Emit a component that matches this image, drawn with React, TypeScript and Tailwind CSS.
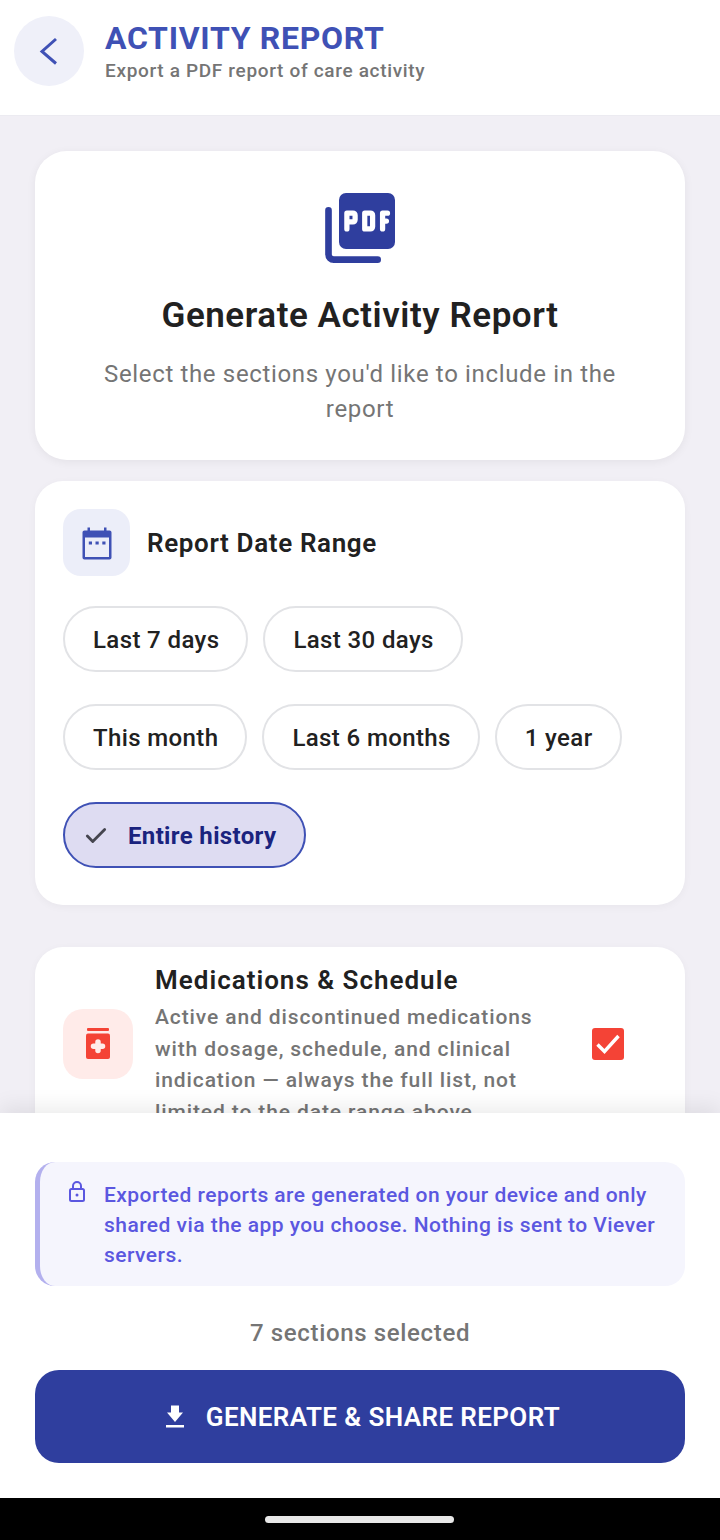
import { Check } from "lucide-react";

const row1 = ["Last 7 days", "Last 30 days"];
const row2 = ["This month", "Last 6 months", "1 year"];

function Chip({ label }: { label: string }) {
  return (
    <div className="h-[66px] pl-[28px] pr-[27px] pt-[2px] flex items-center rounded-full border-2 border-[#e2e3e6] bg-white text-[24px] font-[460] tracking-[0.38px] text-[#212121]">
      {label}
    </div>
  );
}

function BackIcon() {
  return (
    <svg width="42" height="42" viewBox="0 0 42 42" fill="none" stroke="#3f51b5" strokeWidth="3">
      <path d="M28 9L14 21.500L28 33.500" />
    </svg>
  );
}

function PdfIcon() {
  return (
    <svg width="84" height="84" viewBox="0 0 24 24" fill="none">
      <rect x="6" y="2" width="16" height="16" rx="2" fill="#2f3e9e" />
      <path d="M3 6.950V19.500c0 .85.650 1.550 1.500 1.550H17.050" stroke="#2f3e9e" strokeWidth="1.900" strokeLinecap="round" />
      <g stroke="#fff" strokeWidth="1.500" strokeLinecap="round" strokeLinejoin="round">
        <path d="M8.250 12.250V7.750H10c.35 0 .6.25.6.6v1.300c0 .35-.25.6-.6.6H8.250" />
        <path d="M13.350 7.750v4.500H15c.35 0 .6-.25.6-.6v-3.300c0-.35-.25-.6-.6-.6z" />
        <path d="M18.450 12.250v-4.500h1.400M18.450 10h1.100" />
      </g>
    </svg>
  );
}

function CalendarIcon() {
  return (
    <svg width="36" height="36" viewBox="0 0 36 36" fill="#3f51b5">
      <path fillRule="evenodd" d="M8.500 2.500h2.500v3h14v-3h2.500v3h3c1.200 0 2 .8 2 2v25c0 1.200-.8 2-2 2h-25c-1.200 0-2-.8-2-2v-25c0-1.200.8-2 2-2h3v-3zM6 12.500v19.500h24V12.500H6z" />
      <rect x="9.800" y="16.500" width="3.200" height="3" />
      <rect x="16.500" y="16.500" width="3.200" height="3" />
      <rect x="23.300" y="16.500" width="3.200" height="3" />
    </svg>
  );
}

function MedIcon() {
  return (
    <svg width="40" height="40" viewBox="0 0 40 40">
      <rect x="9" y="4" width="22" height="3" rx="1" fill="#f44336" />
      <rect x="8" y="9.500" width="24" height="25.500" rx="2" fill="#f44336" />
      <path d="M20 18v8.600M15.500 22.300h9" stroke="#ffebe9" strokeWidth="5.500" strokeLinecap="round" fill="none" />
    </svg>
  );
}

function CheckedBox() {
  return (
    <svg width="32" height="32" viewBox="0 0 32 32">
      <rect width="32" height="32" rx="3" fill="#f44336" />
      <path d="M5.500 16.500l7 7L26.500 8" fill="none" stroke="#fff" strokeWidth="3.400" />
    </svg>
  );
}

function LockIcon() {
  return (
    <svg width="22" height="22" viewBox="0 0 22 22" fill="none" stroke="#5b57e0" strokeWidth="2">
      <rect x="4" y="8" width="14" height="12" rx="1.500" />
      <path d="M7 8V5a4 4 0 0 1 8 0v3" />
      <circle cx="11" cy="14" r="1.500" fill="#5b57e0" stroke="none" />
    </svg>
  );
}

function DownloadIcon() {
  return (
    <svg width="24" height="24" viewBox="0 0 24 24" fill="#fff">
      <path d="M11 0.500h8V7.500h4L15 17 7 7.500h4zM6 20h18v2.500H6z" />
    </svg>
  );
}

export default function App() {
  return (
    <div className="w-[720px] h-[1540px] flex flex-col overflow-hidden bg-white font-['Roboto',sans-serif]">
      {/* Header */}
      <header className="h-[116px] shrink-0 flex items-start gap-[21px] pl-[14px] pt-4 bg-white border-b border-[#ecebf1]">
        <button className="w-[70px] h-[70px] rounded-full bg-[#eff0f9] flex items-center justify-center">
          <BackIcon />
        </button>
        <div className="flex flex-col">
          <h1 className="text-[32px] leading-[44px] font-bold tracking-[0.7px] text-[#3f51b5]">ACTIVITY REPORT</h1>
          <p className="text-[19px] leading-[22px] font-medium tracking-[0.67px] text-[#757575]">Export a PDF report of care activity</p>
        </div>
      </header>

      {/* Scroll content */}
      <main className="flex-1 min-h-0 overflow-hidden bg-[#f1eff5] px-[35px] pt-[35px] flex flex-col">
        <section className="rounded-[32px] bg-white shadow-[0_2px_10px_rgba(0,0,0,0.06)] h-[309px] shrink-0 flex flex-col items-center pt-[35px]">
          <PdfIcon />
          <h2 className="mt-[24px] text-[35px] leading-[44px] font-semibold tracking-[0.55px] text-[#212121]">Generate Activity Report</h2>
          <p className="mt-[19px] w-[560px] text-center text-[24px] leading-[35px] tracking-[0.65px] text-[#757575]">
            Select the sections you'd like to include in the report
          </p>
        </section>

        <section className="mt-[21px] rounded-[28px] bg-white shadow-[0_2px_8px_rgba(0,0,0,0.04)] h-[424px] shrink-0 px-[28px] pt-[28px] flex flex-col">
          <div className="flex items-center gap-[17px]">
            <div className="w-[67px] h-[67px] rounded-[18px] bg-[#eceef9] flex items-center justify-center">
              <CalendarIcon />
            </div>
            <h3 className="pt-[2px] text-[26px] font-semibold tracking-[0.65px] text-[#212121]">Report Date Range</h3>
          </div>
          <div className="mt-[30px] flex flex-col gap-8">
            <div className="flex gap-[15px]">
              {row1.map((l) => (
                <Chip key={l} label={l} />
              ))}
            </div>
            <div className="flex gap-[15px]">
              {row2.map((l) => (
                <Chip key={l} label={l} />
              ))}
            </div>
            <div className="flex">
              <div className="h-[66px] pl-[18px] pr-[28px] pt-[2px] flex items-center gap-[19px] rounded-full border-2 border-[#3f51b5] bg-[#dedcf2] text-[24px] font-bold tracking-[0.35px] text-[#1a237e]">
                <Check size={26} strokeWidth={2.6} color="#45454f" />
                Entire history
              </div>
            </div>
          </div>
        </section>

        <section className="mt-[42px] rounded-[28px] bg-white shadow-[0_2px_8px_rgba(0,0,0,0.04)] shrink-0 pl-[28px] pr-[61px] flex items-center h-[194px]">
          <div className="w-[70px] h-[70px] rounded-[20px] bg-[#ffebe9] flex items-center justify-center shrink-0">
            <MedIcon />
          </div>
          <div className="ml-[22px] w-[392px] pt-[4px]">
            <h3 className="text-[26px] leading-[33px] font-semibold tracking-[1px] text-[#212121]">Medications &amp; Schedule</h3>
            <p className="mt-[5px] text-[21px] leading-[31.500px] font-[470] tracking-[0.89px] text-[#757575]">
              Active and discontinued medications with dosage, schedule, and clinical indication — always the full list, not limited to the date range above
            </p>
          </div>
          <div className="ml-auto">
            <CheckedBox />
          </div>
        </section>
      </main>

      {/* Bottom sheet */}
      <footer className="relative h-[385px] shrink-0 bg-white px-[35px] pt-[49px] shadow-[0_-6px_20px_rgba(0,0,0,0.08)]">
        <div className="h-[124px] rounded-[20px] border-l-[5px] border-[#b3b0ee] bg-[#f5f5fd] pl-[26px] pt-[18px] flex gap-[16px]">
          <div className="pt-px shrink-0">
            <LockIcon />
          </div>
          <p className="w-[560px] text-[21px] leading-[30px] font-[470] tracking-[0.46px] text-[#5b57e0]">
            Exported reports are generated on your device and only shared via the app you choose. Nothing is sent to Viever servers.
          </p>
        </div>
        <p className="mt-[31px] text-center text-[24px] leading-[32px] font-[470] tracking-[0.65px] text-[#757575]">7 sections selected</p>
        <button className="mt-[21px] w-full h-[93px] rounded-[24px] bg-[#2f3e9e] flex items-center justify-center gap-[22px] text-[26px] font-semibold tracking-[0.4px] text-white">
          <DownloadIcon />
          <span className="pt-[2px]">GENERATE &amp; SHARE REPORT</span>
        </button>
      </footer>

      {/* System nav */}
      <div className="h-[42px] shrink-0 bg-black flex items-center justify-center">
        <div className="w-[189px] h-[7px] mr-[2px] rounded-full bg-[#e8e8e8]" />
      </div>
    </div>
  );
}
